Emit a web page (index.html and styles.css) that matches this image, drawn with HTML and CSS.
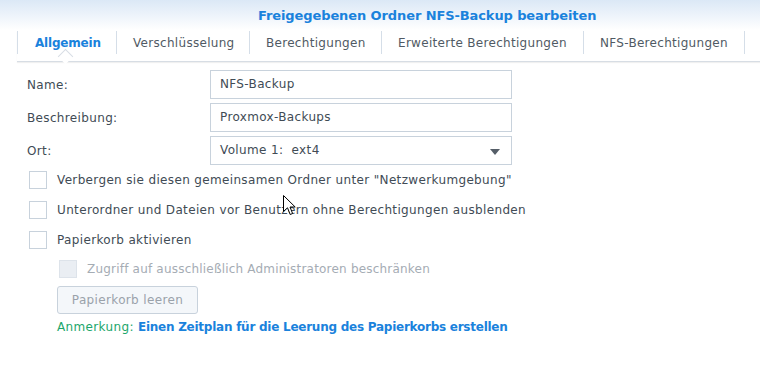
FILE: index.html
```html
<!DOCTYPE html>
<html lang="de">
<head>
<meta charset="utf-8">
<title>Freigegebenen Ordner NFS-Backup bearbeiten</title>
<link rel="stylesheet" href="styles.css">
</head>
<body>
<div class="window">
  <div class="header">
    <div class="title">Freigegebenen Ordner NFS-Backup bearbeiten</div>
    <div class="tabs">
      <div class="tab tab-general active">Allgemein</div>
      <div class="tab tab-encrypt">Verschlüsselung</div>
      <div class="tab tab-perm">Berechtigungen</div>
      <div class="tab tab-adv">Erweiterte Berechtigungen</div>
      <div class="tab tab-nfs">NFS-Berechtigungen</div>
    </div>
  </div>
  <div class="body">
    <div class="field">
      <label class="label">Name:</label>
      <div class="input">NFS-Backup</div>
    </div>
    <div class="field">
      <label class="label">Beschreibung:</label>
      <div class="input">Proxmox-Backups</div>
    </div>
    <div class="field">
      <label class="label">Ort:</label>
      <div class="input select">Volume 1:&nbsp; ext4<span class="arrow"></span></div>
    </div>
    <div class="check"><span class="box"></span><span>Verbergen sie diesen gemeinsamen Ordner unter "Netzwerkumgebung"</span></div>
    <div class="check"><span class="box"></span><span>Unterordner und Dateien vor Benutzern ohne Berechtigungen ausblenden</span></div>
    <div class="check"><span class="box"></span><span>Papierkorb aktivieren</span></div>
    <div class="sub">
      <div class="check disabled"><span class="box"></span><span>Zugriff auf ausschließlich Administratoren beschränken</span></div>
      <div class="button">Papierkorb leeren</div>
      <div class="note"><span class="note-label">Anmerkung:</span> <span class="link">Einen Zeitplan für die Leerung des Papierkorbs erstellen</span></div>
    </div>
  </div>
  <svg class="cursor" width="13" height="21" viewBox="0 0 13 21"><path d="M0.5 0.5 L0.5 16.5 L4.5 12.8 L7.2 19.5 L9.6 18.5 L7 12 L12.2 12 Z" fill="#fff" stroke="#000" stroke-width="1"/></svg>
</div>
</body>
</html>
```
FILE: styles.css
```css
html, body {
  margin: 0;
  padding: 0;
  background: #fff;
}
body {
  font-family: "DejaVu Sans", Verdana, sans-serif;
  font-size: 12px;
  letter-spacing: 0.35px;
  color: #414b55;
}
.window {
  position: relative;
  width: 760px;
  height: 368px;
  overflow: hidden;
  background: #fff;
}
.header {
  background: linear-gradient(#dbe8f6 0px, #eef4fb 16px, #ffffff 30px);
  padding-left: 17px;
}
.title {
  height: 31px;
  line-height: 31px;
  padding-left: 241px;
  font-weight: bold;
  font-size: 13px;
  color: #1a82dc;
  letter-spacing: -0.1px;
}
.tabs {
  display: flex;
  height: 30px;
  border-bottom: 1px solid #d7dde4;
  box-shadow: 0 1px 1px rgba(0,0,0,0.06);
}
.tab {
  position: relative;
  flex: none;
  box-sizing: border-box;
  height: 23px;
  line-height: 24px;
  padding-left: 16px;
  border-right: 1px solid #d5dee8;
  color: #505a64;
  white-space: nowrap;
  letter-spacing: 0.3px;
}
.tab-general {
  width: 100px;
  padding-left: 17px;
  border-left: 1px solid #d5dee8;
}
.tab-encrypt { width: 133px; }
.tab-perm { width: 132px; }
.tab-adv { width: 202px; }
.tab-nfs { width: 161px; }
.tab.active {
  color: #1a82dc;
  font-weight: bold;
  letter-spacing: -0.2px;
}
.tab.active::after {
  content: "";
  position: absolute;
  left: 42px;
  bottom: -8px;
  width: 10px;
  height: 10px;
  background: #fff;
  border-left: 1px solid #d7dde4;
  border-top: 1px solid #d7dde4;
  transform: rotate(45deg);
}
.body {
  padding: 8px 0 0 27px;
}
.field {
  display: flex;
  align-items: center;
  height: 29px;
  margin-bottom: 4px;
}
.label {
  width: 183px;
}
.input {
  position: relative;
  box-sizing: border-box;
  width: 302px;
  height: 29px;
  line-height: 27px;
  border: 1px solid #c8d2dc;
  padding-left: 9px;
  color: #414b55;
}
.select .arrow {
  position: absolute;
  right: 11px;
  top: 12px;
  width: 0;
  height: 0;
  border-left: 5px solid transparent;
  border-right: 5px solid transparent;
  border-top: 6px solid #555e68;
}
.check {
  display: flex;
  align-items: center;
  height: 18px;
  margin-top: 6px;
  margin-bottom: 3px;
  padding-left: 2px;
}
.check + .check {
  margin-top: 12px;
}
.box {
  box-sizing: border-box;
  width: 18px;
  height: 18px;
  border: 1px solid #c8d2dc;
  background: #fff;
  margin-right: 10px;
  flex: none;
}
.sub {
  padding-left: 30px;
  margin-top: 11px;
}
.check.disabled {
  margin-top: 0;
  color: #a5acb4;
  letter-spacing: 0.2px;
}
.check.disabled .box {
  background: #eaeef3;
  border-color: #dde3ea;
}
.button {
  box-sizing: border-box;
  width: 141px;
  height: 28px;
  line-height: 26px;
  margin-top: 8px;
  text-align: center;
  border: 1px solid #c8d2dc;
  border-radius: 3px;
  background: #f4f7fa;
  color: #9aa2aa;
}
.note {
  margin-top: 6px;
}
.note-label {
  color: #1ba66b;
}
.link {
  color: #1a82dc;
  font-weight: bold;
  letter-spacing: -0.25px;
}
.cursor {
  position: absolute;
  left: 283px;
  top: 195px;
}
```
